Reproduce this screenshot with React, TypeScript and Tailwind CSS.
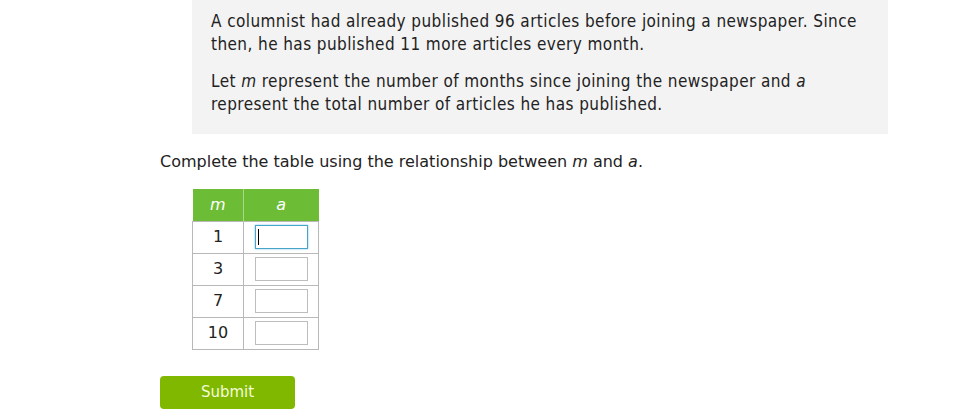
import React from "react";

export default function App() {
  const rows = [1, 3, 7, 10];
  return (
    <div className="w-[961px] h-[416px] bg-white relative overflow-hidden" style={{ fontFamily: "Verdana, 'DejaVu Sans', sans-serif" }}>
      <div className="ml-[192px] w-[696px] h-[134px] bg-[#f3f3f3] pl-[19px] pr-[20px] pt-[10px] text-[#222] text-[17px] leading-[23px] tracking-[0.42px]" style={{ fontFamily: "'DejaVu Sans Condensed', 'DejaVu Sans', sans-serif" }}>
        <p>A columnist had already published 96 articles before joining a newspaper. Since then, he has published 11 more articles every month.</p>
        <p className="mt-[14px]">
          Let <i>m</i> represent the number of months since joining the newspaper and <i>a</i> represent the total number of articles he has published.
        </p>
      </div>
      <div className="ml-[160px] mt-[18px] text-[16px] leading-[20px] text-[#222]">
        Complete the table using the relationship between <i>m</i> and <i>a</i>.
      </div>
      <table className="ml-[192px] mt-[17px] border-collapse text-[16px] text-[#222]">
        <thead>
          <tr className="bg-[#6cbd35] text-white h-[32px]">
            <th className="w-[51px] font-normal italic border-r border-[#a7d98a]">m</th>
            <th className="w-[75px] font-normal italic">a</th>
          </tr>
        </thead>
        <tbody>
          {rows.map((r, i) => (
            <tr key={r} className="h-[32px]">
              <td className="border border-[#b8b8b8] text-center">{r}</td>
              <td className="border border-[#b8b8b8] text-center">
                <div className={`mx-auto w-[53px] h-[24px] border ${i === 0 ? "border-[#4aa3c8] shadow-[0_0_2px_#7cc7e6]" : "border-[#bdbdbd]"} flex items-center`}>
                  {i === 0 && <div className="ml-[2px] w-[1px] h-[16px] bg-black" />}
                </div>
              </td>
            </tr>
          ))}
        </tbody>
      </table>
      <button className="ml-[160px] mt-[26px] w-[135px] h-[33px] rounded-[4px] bg-[#80b800] text-[#f4fbd9] text-[15px] block">
        Submit
      </button>
    </div>
  );
}
